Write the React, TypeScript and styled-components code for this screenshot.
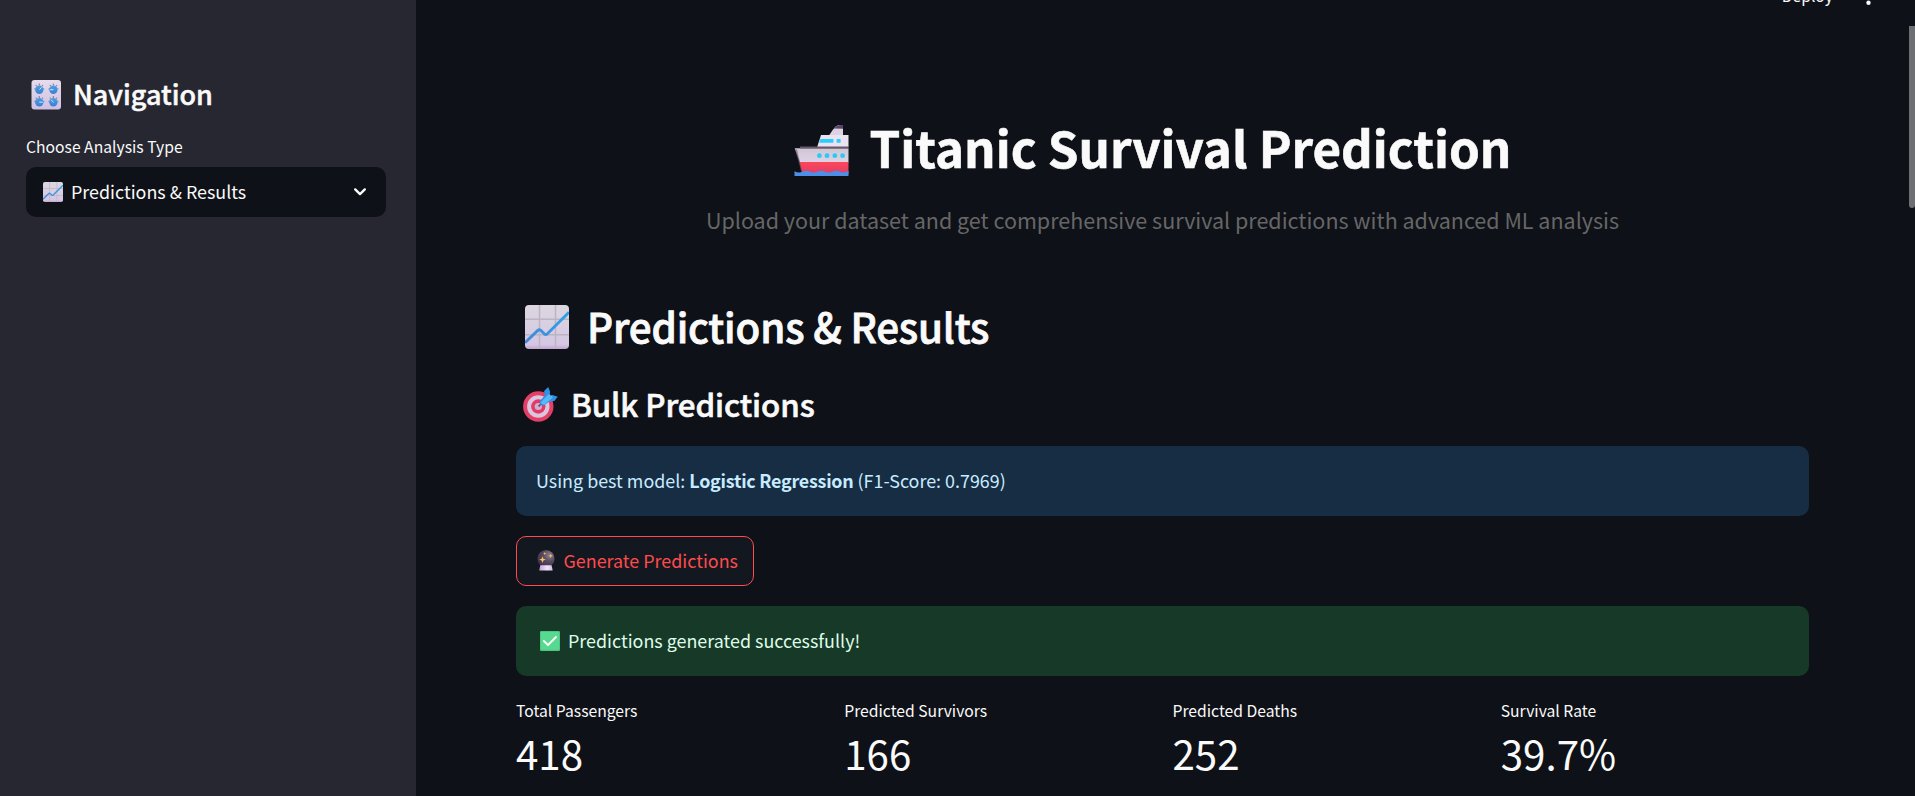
import React from "react";
import styled, { createGlobalStyle } from "styled-components";

const GlobalStyle = createGlobalStyle`
  *, *::before, *::after { box-sizing: border-box; }
  html, body { margin: 0; padding: 0; background: #0e1117; overflow: hidden; }
  body { font-family: "Noto Sans CJK SC", "Noto Sans", sans-serif; color: #fafafa; }
  h1, h2, h3, p { margin: 0; }
  svg { display: block; flex: none; }
`;

const Page = styled.div`
  position: relative;
  display: flex;
  width: 1915px;
  height: 796px;
  overflow: hidden;
  background: #0e1117;
`;

const Sidebar = styled.aside`
  flex: none;
  width: 416px;
  padding: 76px 30px 0 26px;
  background: #262730;
`;

const SidebarTitle = styled.h2`
  display: flex;
  align-items: center;
  gap: 12px;
  height: 36px;
  padding-left: 5px;
  font-size: 27px;
  line-height: 36px;
  font-weight: 500;
  -webkit-text-stroke: 0.5px currentColor;

  svg {
    margin-top: 1px;
  }
`;

const FieldLabel = styled.div`
  margin-top: 22px;
  font-size: 15.7px;
  line-height: 26px;
`;

const Select = styled.div`
  display: flex;
  align-items: center;
  width: 360px;
  height: 50px;
  margin-top: 7px;
  padding: 0 19px 0 17px;
  border-radius: 10px;
  background: #0e1117;
  font-size: 17.9px;
  line-height: 26px;
`;

const SelectValue = styled.span`
  flex: 1;
  margin-left: 8px;
  padding-bottom: 2px;
`;

const Main = styled.main`
  flex: 1;
  padding: 114px 106px 0 100px;
`;

const Title = styled.h1`
  display: flex;
  justify-content: center;
  align-items: center;
  gap: 21px;
  height: 66px;
  padding-right: 20px;
  font-size: 49.3px;
  line-height: 66px;
  font-weight: 700;
  -webkit-text-stroke: 0.6px currentColor;

  svg {
    margin-top: 6px;
  }
`;

const Subtitle = styled.p`
  margin-top: 22px;
  text-align: center;
  color: #666666;
  font-size: 21.5px;
  line-height: 36px;
`;

const SectionTitle = styled.h2`
  display: flex;
  align-items: center;
  gap: 18px;
  height: 54px;
  margin-top: 61px;
  padding-left: 9px;
  font-size: 40.3px;
  line-height: 54px;
  font-weight: 500;
  letter-spacing: -0.17px;
  -webkit-text-stroke: 0.8px currentColor;

  svg {
    margin-top: 2px;
  }
`;

const SubsectionTitle = styled.h3`
  display: flex;
  align-items: center;
  gap: 12px;
  height: 42px;
  margin-top: 30px;
  padding-left: 7px;
  font-size: 31.3px;
  line-height: 42px;
  font-weight: 500;
  letter-spacing: -0.08px;
  -webkit-text-stroke: 0.6px currentColor;
`;

const Alert = styled.div<{ $tone: "info" | "success" }>`
  display: flex;
  align-items: center;
  height: 70px;
  padding: 0 20px 2px;
  border-radius: 10px;
  background: ${(p) => (p.$tone === "info" ? "#172d43" : "#173928")};
  color: ${(p) => (p.$tone === "info" ? "#c7ebff" : "#dffde9")};
  font-size: 17.9px;
  line-height: 28px;
  white-space: pre;
`;

const ModelName = styled.strong`
  font-weight: 700;
  letter-spacing: -0.25px;
`;

const Stack = styled.div`
  display: flex;
  flex-direction: column;
  align-items: stretch;
  gap: 20px;
  margin-top: 21px;
`;

const Button = styled.button`
  display: flex;
  align-items: center;
  align-self: flex-start;
  gap: 8.5px;
  width: 238px;
  height: 50px;
  padding: 0 0 2px 20px;
  border: 1px solid #ff4b4b;
  border-radius: 10px;
  background: #131720;
  color: #ff4b4b;
  font: inherit;
  font-size: 17.9px;
  line-height: 26px;
  white-space: nowrap;
`;

const SuccessText = styled.span`
  margin-left: 8px;
`;

const SuccessMark = styled.span`
  margin: 2px 0 0 4px;
`;

const Metrics = styled.div`
  display: grid;
  grid-template-columns: repeat(4, 1fr);
  gap: 20px;
  margin-top: 22px;
`;

const MetricLabel = styled.div`
  font-size: 15.7px;
  line-height: 26px;
`;

const MetricValue = styled.div`
  margin-top: 2px;
  font-size: 40.3px;
  line-height: 54px;
`;

const TopActions = styled.div`
  position: absolute;
  top: -17px;
  right: 44px;
  display: flex;
  align-items: center;
  gap: 33px;
  font-size: 15.7px;
  line-height: 26px;

  svg {
    margin-top: -2px;
  }
`;

const Thumb = styled.div`
  position: absolute;
  top: 26px;
  right: 0;
  width: 6px;
  height: 182px;
  border-radius: 0 0 3px 3px;
  background: #6e6f72;
`;

const KnobsIcon = () => (
  <svg width="30" height="30" viewBox="0 0 30 30">
    <defs>
      <linearGradient id="knobPlate" x1="0" y1="0" x2="0" y2="1">
        <stop offset="0" stopColor="#e6dcec" />
        <stop offset="1" stopColor="#cfc0e2" />
      </linearGradient>
      <linearGradient id="knob" x1="0" y1="0" x2="0" y2="1">
        <stop offset="0" stopColor="#4aa0e6" />
        <stop offset="1" stopColor="#3f7fd0" />
      </linearGradient>
    </defs>
    <rect x="0.5" y="0" width="29.5" height="29.5" rx="3" fill="url(#knobPlate)" />
    {[[8.3, 9.7], [22.4, 9.7], [8.3, 22.2], [22.4, 22.2]].map(([x, y]) => (
      <g key={`${x}-${y}`}>
        <path
          d={`M${x - 5} ${y - 1}l1 .3M${x - 3.6} ${y - 4.6}l1 1M${x} ${y - 6.3}v2M${x + 3.6} ${y - 4.6}l-1 1M${x + 5} ${y - 1}l-1 .3`}
          stroke="#8d8495"
          strokeWidth="1.2"
        />
        <circle cx={x} cy={y} r="4.2" fill="url(#knob)" />
      </g>
    ))}
    <path d="M8.5 9.5l2.2-2.2M19.2 9.7h3.2M8.3 22.2h3.4M20.2 20l2.4 2.3" stroke="#d6eaff" strokeWidth="1" />
  </svg>
);

const ChartIcon = ({ size }: { size: number }) => (
  <svg width={size} height={size} viewBox="0 0 44 44">
    <defs>
      <linearGradient id="chartPaper" x1="0" y1="0" x2="0" y2="1">
        <stop offset="0" stopColor="#dcd7df" />
        <stop offset="0.9" stopColor="#d5c7e4" />
        <stop offset="1" stopColor="#bea5cf" />
      </linearGradient>
      <linearGradient id="chartLine" x1="0" y1="1" x2="1" y2="0">
        <stop offset="0" stopColor="#4389d8" />
        <stop offset="1" stopColor="#2ea3e6" />
      </linearGradient>
    </defs>
    <rect width="44" height="44" rx="4" fill="url(#chartPaper)" />
    <path d="M14.5 0v44M30.5 0v44M0 14.3h44M0 29.7h44" stroke="#bcb4c2" strokeWidth="1.5" />
    <path d="M0 37.8L12.8 25.4Q14.5 23.9 16 25.6L19.2 28.8Q20.8 30.2 22.4 28.8L44 7.3" fill="none" stroke="url(#chartLine)" strokeWidth="2.9" />
  </svg>
);

const ShipIcon = () => (
  <svg width="55" height="52" viewBox="0 0 55 52">
    <defs>
      <linearGradient id="hull" x1="0" y1="0" x2="0" y2="1">
        <stop offset="0" stopColor="#cfc6d4" />
        <stop offset="1" stopColor="#ddd3e5" />
      </linearGradient>
      <linearGradient id="keel" x1="0" y1="0" x2="0" y2="1">
        <stop offset="0" stopColor="#ff4558" />
        <stop offset="1" stopColor="#dd4069" />
      </linearGradient>
    </defs>
    <path d="M35 11.5Q38.5 5.5 41.5 2.7Q43.5 1 46 1H49V11.5Z" fill="#dcd2e3" />
    <path d="M39.8 4.5Q43 1 46 1H49V4.7Z" fill="#57446a" />
    <path d="M27 11H54.5V23H23.2Z" fill="#ebe2ef" />
    <path d="M.7 24.2H54.5V38.5H5.7Z" fill="url(#hull)" />
    <path d="M6 22.6H54.5V24.4H6Z" fill="#67586f" />
    <path d="M5.3 38H54.5V50H8.2Z" fill="url(#keel)" />
    <path d="M1 25.5L7.6 49.5H8.8L3 25.5Z" fill="#5c4a65" opacity="0.55" />
    <path d="M26.4 15H39.4V18.8H25.2ZM42.6 15H46.6V18.8H42.6Z" fill="#29ceff" />
    {[25.4, 33, 40.8, 48.6].map((x) => (
      <circle key={x} cx={x} cy="31.7" r="2.4" fill="#2bcaf4" />
    ))}
    <path d="M.5 47.2Q5 49.8 9 47.6Q13 45.6 16.5 48Q20 49.4 23.6 47.6Q27.5 45.8 31.5 48Q35 49.4 39 47.5Q43 45.8 46.5 47.9Q50 49.4 54.5 47V52H.5Z" fill="#4b8fe8" />
  </svg>
);

const TargetIcon = () => (
  <svg width="36" height="36" viewBox="0 0 36 36">
    <circle cx="15.3" cy="20.5" r="15.2" fill="#e33f67" />
    <circle cx="15.3" cy="20.5" r="11.2" fill="#d9c7df" />
    <circle cx="15.3" cy="20.5" r="7.2" fill="#e63968" />
    <circle cx="15.3" cy="20.5" r="3.6" fill="#c9b3cf" />
    <path d="M15.5 20.5L20.5 15.5" stroke="#76577c" strokeWidth="1.8" />
    <path d="M17 15L21.8 9.4L21.1 5L25.2 1L27.2 6.1L26 9.9L29.3 9.1L34.8 10.7L31.2 15.1L26.4 15.4L21.3 19.2Q16.2 20 17 15Z" fill="#2f92e8" />
    <path d="M18.4 17.4L27 8.6M20.2 18.2L29 10.6" stroke="#55baf8" strokeWidth="2.4" />
  </svg>
);

const CrystalBallIcon = () => (
  <svg width="18" height="21" viewBox="0 0 18 21">
    <defs>
      <radialGradient id="orb" cx="0.7" cy="0.3" r="0.75">
        <stop offset="0" stopColor="#8b8292" />
        <stop offset="0.5" stopColor="#57495f" />
        <stop offset="1" stopColor="#43334f" />
      </radialGradient>
      <linearGradient id="orbBase">
        <stop offset="0" stopColor="#c6a2dc" />
        <stop offset="0.6" stopColor="#f2e6f6" />
        <stop offset="1" stopColor="#d5b9e4" />
      </linearGradient>
    </defs>
    <circle cx="9" cy="8.7" r="8.6" fill="url(#orb)" />
    <path d="M3.3 15.2H14.6L15.7 20.6H2.3Z" fill="url(#orbBase)" />
    <path d="M5.5 6.3L6.4 8.7L8.8 9.6L6.4 10.5L5.5 12.9L4.6 10.5L2.2 9.6L4.6 8.7ZM13.7 3.8L14.3 5.3L15.8 5.9L14.3 6.5L13.7 8L13.1 6.5L11.6 5.9L13.1 5.3ZM7.7 2L8.2 3.1L9.3 3.5L8.2 4L7.7 5L7.3 4L6.2 3.5L7.3 3.1Z" fill="#ffbe5c" />
  </svg>
);

const CheckIcon = () => (
  <svg width="20" height="20" viewBox="0 0 20 20">
    <rect width="20" height="20" rx="1.3" fill="#4fc684" />
    <rect x="1" y="1" width="18" height="17.5" rx="1" fill="#58d991" />
    <path d="M3.8 10L8 14L16 6" fill="none" stroke="#f6fff9" strokeWidth="1.9" strokeLinecap="round" strokeLinejoin="round" />
  </svg>
);

const Chevron = () => (
  <svg width="14" height="10" viewBox="0 0 14 10">
    <path d="M2.2 2.4L7 7.1L11.8 2.4" fill="none" stroke="#fafafa" strokeWidth="2.4" strokeLinecap="round" strokeLinejoin="round" />
  </svg>
);

const MenuDots = () => (
  <svg width="5" height="20" viewBox="0 0 5 20">
    <circle cx="2.5" cy="2.3" r="2.2" fill="#fafafa" />
    <circle cx="2.5" cy="10" r="2.2" fill="#fafafa" />
    <circle cx="2.5" cy="17.7" r="2.2" fill="#fafafa" />
  </svg>
);

const metrics = [
  { label: "Total Passengers", value: "418" },
  { label: "Predicted Survivors", value: "166" },
  { label: "Predicted Deaths", value: "252" },
  { label: "Survival Rate", value: "39.7%" },
];

export default function App() {
  return (
    <>
      <GlobalStyle />
      <Page>
        <Sidebar>
          <SidebarTitle>
            <KnobsIcon />
            <span>Navigation</span>
          </SidebarTitle>
          <FieldLabel>Choose Analysis Type</FieldLabel>
          <Select>
            <ChartIcon size={20} />
            <SelectValue>Predictions &amp; Results</SelectValue>
            <Chevron />
          </Select>
        </Sidebar>
        <Main>
          <Title>
            <ShipIcon />
            <span>Titanic Survival Prediction</span>
          </Title>
          <Subtitle>Upload your dataset and get comprehensive survival predictions with advanced ML analysis</Subtitle>
          <SectionTitle>
            <ChartIcon size={44} />
            <span>Predictions &amp; Results</span>
          </SectionTitle>
          <SubsectionTitle>
            <TargetIcon />
            <span>Bulk Predictions</span>
          </SubsectionTitle>
          <Stack>
            <Alert $tone="info">
              Using best model: <ModelName>Logistic Regression</ModelName> (F1-Score: 0.7969)
            </Alert>
            <Button>
              <CrystalBallIcon />
              <span>Generate Predictions</span>
            </Button>
            <Alert $tone="success">
              <SuccessMark>
                <CheckIcon />
              </SuccessMark>
              <SuccessText>Predictions generated successfully!</SuccessText>
            </Alert>
          </Stack>
          <Metrics>
            {metrics.map((m) => (
              <div key={m.label}>
                <MetricLabel>{m.label}</MetricLabel>
                <MetricValue>{m.value}</MetricValue>
              </div>
            ))}
          </Metrics>
        </Main>
        <TopActions>
          <span>Deploy</span>
          <MenuDots />
        </TopActions>
        <Thumb />
      </Page>
    </>
  );
}
